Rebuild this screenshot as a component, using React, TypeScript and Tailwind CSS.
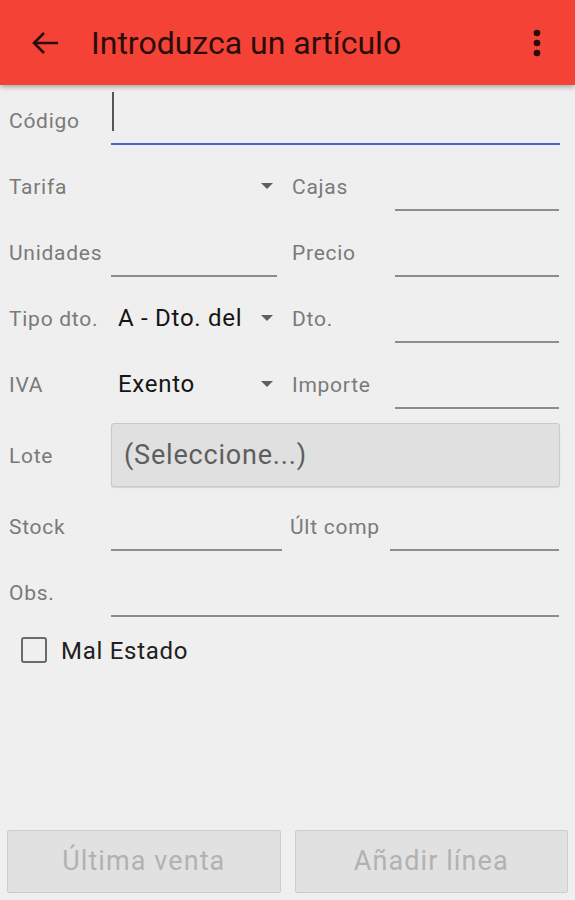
import React from 'react';

const font = { fontFamily: 'Roboto, "Liberation Sans", sans-serif' };

// Small dropdown triangle used by the spinners
function Caret() {
  return (
    <svg width="14" height="8" viewBox="0 0 14 8" className="shrink-0">
      <path d="M1 1h12L7 7z" fill="#5f5f5f" />
    </svg>
  );
}

function Label({ children, className = '' }: { children: React.ReactNode; className?: string }) {
  return (
    <div className={`pt-[3px] text-[21px] tracking-[0.035em] text-[#7a7a7a] ${className}`}>{children}</div>
  );
}

function Field({ className = '' }: { className?: string }) {
  return <div className={`h-[50px] border-b-2 border-[#8c8c8c] ${className}`} />;
}

function Spinner({ value }: { value?: string }) {
  return (
    <div className="flex h-[48px] w-[166px] items-center pl-[7px] pr-[3px]">
      <div className="flex-1 overflow-hidden whitespace-nowrap text-[24px] tracking-[0.03em] text-[#151515]">
        {value}
      </div>
      <Caret />
    </div>
  );
}

export default function App() {
  return (
    <div style={font} className="flex min-h-[900px] flex-col bg-[#efefef]">
      {/* Toolbar */}
      <div className="relative z-10 flex h-[85px] items-center bg-[#f44336] shadow-[0_2px_5px_rgba(0,0,0,0.3)]">
        <svg width="30" height="24" viewBox="0 0 30 24" className="ml-[31px]">
          <path d="M3 12h24M13 2L3 12l10 10" stroke="#2a0d0a" strokeWidth="2.6" fill="none" />
        </svg>
        <div className="ml-[30px] flex-1 text-[32px] text-[#2a0d0a]">Introduzca un artículo</div>
        <svg width="8" height="28" viewBox="0 0 8 28" className="mr-[34px]">
          <circle cx="4" cy="4" r="3.3" fill="#2a0d0a" />
          <circle cx="4" cy="14" r="3.3" fill="#2a0d0a" />
          <circle cx="4" cy="24" r="3.3" fill="#2a0d0a" />
        </svg>
      </div>

      {/* Form */}
      <div className="mt-[2px] flex flex-col">
        <div className="flex h-[66px] items-center">
          <Label className="w-[111px] pl-[9px]">Código</Label>
          <div className="mr-[15px] flex h-[50px] flex-1 items-start border-b-2 border-[#4a62d6]">
            <div className="-mt-[3px] ml-[1px] h-[39px] w-[2px] bg-[#555]" />
          </div>
        </div>

        <div className="flex h-[66px] items-center">
          <Label className="w-[111px] pl-[9px]">Tarifa</Label>
          <Spinner />
          <Label className="ml-[15px] w-[103px]">Cajas</Label>
          <Field className="mr-[16px] flex-1" />
        </div>

        <div className="flex h-[66px] items-center">
          <Label className="w-[111px] pl-[9px]">Unidades</Label>
          <Field className="w-[166px]" />
          <Label className="ml-[15px] w-[103px]">Precio</Label>
          <Field className="mr-[16px] flex-1" />
        </div>

        <div className="flex h-[66px] items-center">
          <Label className="w-[111px] pl-[9px]">Tipo dto.</Label>
          <Spinner value="A - Dto. del" />
          <Label className="ml-[15px] w-[103px]">Dto.</Label>
          <Field className="mr-[16px] flex-1" />
        </div>

        <div className="flex h-[66px] items-center">
          <Label className="w-[111px] pl-[9px]">IVA</Label>
          <Spinner value="Exento" />
          <Label className="ml-[15px] w-[103px]">Importe</Label>
          <Field className="mr-[16px] flex-1" />
        </div>

        <div className="flex h-[76px] items-center">
          <Label className="w-[111px] pl-[9px]">Lote</Label>
          <div className="mr-[15px] flex h-[64px] flex-1 items-center rounded-[3px] border border-[#c9c9c9] bg-[#e0e0e0] pl-[12px] text-[27px] tracking-[0.03em] text-[#5e5e5e] shadow-[0_1px_1px_rgba(0,0,0,0.12)]">
            (Seleccione...)
          </div>
        </div>

        <div className="flex h-[66px] items-center">
          <Label className="w-[111px] pl-[9px]">Stock</Label>
          <Field className="w-[171px]" />
          <Label className="ml-[8px] w-[100px]">Últ comp</Label>
          <Field className="mr-[16px] flex-1" />
        </div>

        <div className="flex h-[66px] items-center">
          <Label className="w-[111px] pl-[9px]">Obs.</Label>
          <Field className="mr-[16px] flex-1" />
        </div>

        <div className="flex h-[50px] items-center pl-[21px]">
          <div className="h-[26px] w-[26px] rounded-[3px] border-2 border-[#6a6a6a]" />
          <div className="ml-[14px] pt-[2px] text-[24px] tracking-[0.03em] text-[#202020]">Mal Estado</div>
        </div>
      </div>

      <div className="flex-1" />

      {/* Bottom buttons */}
      <div className="flex gap-[14px] px-[7px] pb-[7px]">
        <button className="h-[63px] flex-1 rounded-[2px] border border-[#cdcdcd] bg-[#e1e1e1] text-[27px] tracking-[0.04em] text-[#b2b2b2]">
          Última venta
        </button>
        <button className="h-[63px] flex-1 rounded-[2px] border border-[#cdcdcd] bg-[#e1e1e1] text-[27px] tracking-[0.04em] text-[#b2b2b2]">
          Añadir línea
        </button>
      </div>
    </div>
  );
}
